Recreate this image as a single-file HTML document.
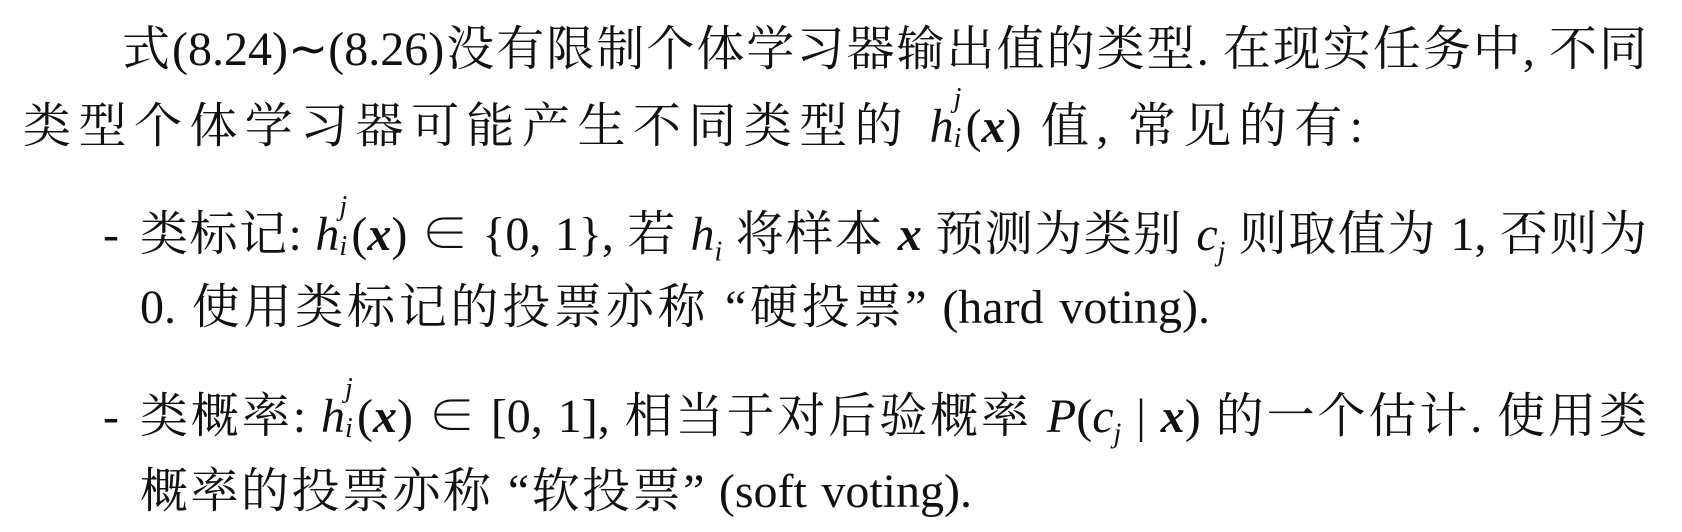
<!DOCTYPE html>
<html lang="zh"><head><meta charset="utf-8"><style>
html,body{margin:0;padding:0;background:#fff;}
body{width:1682px;height:532px;position:relative;overflow:hidden;color:#111;
font-family:"Liberation Serif","Noto Serif CJK SC",serif;font-size:48px;}
.l{position:absolute;line-height:60px;white-space:nowrap;}
.j{text-align:justify;text-align-last:justify;}
i{font-style:italic;}
b{font-weight:bold;font-style:italic;}
.h{position:relative;display:inline-block;padding-right:12px;}
.h sup{position:absolute;font-size:28px;top:-12px;left:24px;font-style:italic;line-height:1;}
.h sub{position:absolute;font-size:28px;top:28px;left:24px;font-style:italic;line-height:1;}
.dash{position:absolute;left:103px;line-height:60px;}
</style></head><body>
<div class="l j" style="left:122px;top:20px;width:1525px;">式(8.24)∼(8.26)没有限制个体学习器输出值的类型. 在现实任务中, 不同</div>
<div class="l j" style="left:23px;top:97px;width:1340px;">类型个体学习器可能产生不同类型的 <span class="h"><i>h</i><sup>j</sup><sub>i</sub></span>(<b>x</b>) 值, 常见的有:</div>
<div class="dash" style="top:205px;">-</div>
<div class="l j" style="left:140px;top:205px;width:1507px;">类标记: <span class="h"><i>h</i><sup>j</sup><sub>i</sub></span>(<b>x</b>) ∈ {0, 1}, 若 <i>h<sub style="font-size:28px">i</sub></i> 将样本 <b>x</b> 预测为类别 <i>c<sub style="font-size:28px">j</sub></i> 则取值为 1, 否则为</div>
<div class="l j" style="left:140px;top:278px;width:1070px;">0. 使用类标记的投票亦称 “硬投票” (hard voting).</div>
<div class="dash" style="top:387px;">-</div>
<div class="l j" style="left:140px;top:387px;width:1507px;">类概率: <span class="h"><i>h</i><sup>j</sup><sub>i</sub></span>(<b>x</b>) ∈ [0, 1], 相当于对后验概率 <i>P</i>(<i>c<sub style="font-size:28px">j</sub></i> | <b>x</b>) 的一个估计. 使用类</div>
<div class="l j" style="left:140px;top:462px;width:832px;">概率的投票亦称 “软投票” (soft voting).</div>
</body></html>
